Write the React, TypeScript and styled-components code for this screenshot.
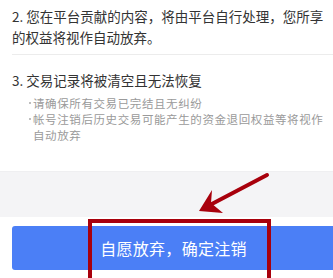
import React from 'react';
import styled, { createGlobalStyle } from 'styled-components';

const GlobalStyle = createGlobalStyle`
  html, body {
    margin: 0;
    padding: 0;
    background: #ffffff;
    overflow: hidden;
  }
  body {
    font-family: 'Noto Sans CJK SC', 'Noto Sans', sans-serif;
    -webkit-font-smoothing: antialiased;
  }
`;

const Page = styled.div`
  position: relative;
  width: 333px;
  height: 278px;
  overflow: hidden;
  background: #ffffff;
`;

const Content = styled.div`
  padding-left: 12px;
  height: 171px;
  box-sizing: border-box;
`;

const Item = styled.div<{ $divider?: boolean; $top: number; $bottom: number }>`
  padding: ${(p) => p.$top}px 4px ${(p) => p.$bottom}px 0;
  border-bottom: ${(p) => (p.$divider ? '1px solid #ececec' : 'none')};
`;

const Title = styled.div`
  font-size: 13.5px;
  line-height: 21px;
  color: #333333;
  padding-right: 2px;
`;

const Notes = styled.ul`
  list-style: none;
  margin: 4px 0 0;
  padding: 0;
`;

const Note = styled.li`
  position: relative;
  padding-left: 21px;
  font-size: 11.5px;
  line-height: 16px;
  letter-spacing: 0.6px;
  color: #9a9a9a;

  &::before {
    content: '';
    position: absolute;
    left: 17px;
    top: 7px;
    width: 2px;
    height: 2px;
    border-radius: 50%;
    background: #a8a8a8;
  }
`;

const Gap = styled.div`
  height: 46px;
  background: #f4f4f6;
  border-top: 1px solid #efeff1;
  box-sizing: border-box;
`;

const Footer = styled.div`
  padding: 9px 0 0 12px;
`;

const Button = styled.button`
  display: flex;
  align-items: center;
  justify-content: center;
  width: 323px;
  height: 44px;
  border: none;
  border-radius: 3px;
  background: #4b7ff6;
  color: #ffffff;
  font-family: 'Noto Sans CJK SC', 'Noto Sans', sans-serif;
  font-size: 16px;
  letter-spacing: 0.3px;
  padding: 0;
`;

const Highlight = styled.div`
  position: absolute;
  left: 88px;
  top: 219px;
  width: 183px;
  height: 70px;
  border: 4px solid #a8000c;
  box-sizing: border-box;
  pointer-events: none;
`;

const Arrow = styled.svg`
  position: absolute;
  left: 0;
  top: 0;
  pointer-events: none;
`;

export default function App() {
  return (
    <Page>
      <GlobalStyle />
      <Content>
        <Item $divider $top={6} $bottom={6}>
          <Title>2. 您在平台贡献的内容，将由平台自行处理，您所享的权益将视作自动放弃。</Title>
        </Item>
        <Item $top={15} $bottom={0}>
          <Title>3. 交易记录将被清空且无法恢复</Title>
          <Notes>
            <Note>请确保所有交易已完结且无纠纷</Note>
            <Note>帐号注销后历史交易可能产生的资金退回权益等将视作自动放弃</Note>
          </Notes>
        </Item>
      </Content>
      <Gap />
      <Footer>
        <Button>自愿放弃，确定注销</Button>
      </Footer>
      <Highlight />
      <Arrow width="333" height="278" viewBox="0 0 333 278">
        <line x1="267" y1="175" x2="208" y2="206" stroke="#a8000c" strokeWidth="4" strokeLinecap="round" />
        <polygon points="199,211 212,190 211,203 223,213" fill="#a8000c" />
      </Arrow>
    </Page>
  );
}
